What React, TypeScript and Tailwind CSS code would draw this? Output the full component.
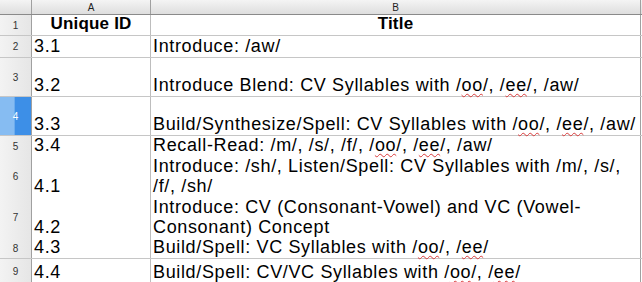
import React from "react";

const Sq = ({ children }: { children: React.ReactNode }) => (
  <span className="underline decoration-wavy decoration-[#d83a3a] decoration-1 underline-offset-[2px]">
    {children}
  </span>
);

interface Row {
  n: number;
  h: string;
  line: boolean;
  a: string;
  b: React.ReactNode;
  selected?: boolean;
}

const rows: Row[] = [
  {
    n: 2,
    h: "h-[22px]",
    line: true,
    a: "3.1",
    b: "Introduce: /aw/",
  },
  {
    n: 3,
    h: "h-[39px]",
    line: true,
    a: "3.2",
    b: (
      <>
        Introduce Blend: CV Syllables with /<Sq>oo</Sq>/, /<Sq>ee</Sq>/, /aw/
      </>
    ),
  },
  {
    n: 4,
    h: "h-[39px]",
    line: true,
    a: "3.3",
    selected: true,
    b: (
      <>
        Build/Synthesize/Spell: CV Syllables with /<Sq>oo</Sq>/, /<Sq>ee</Sq>/, /aw/
      </>
    ),
  },
  {
    n: 5,
    h: "h-[20px]",
    line: false,
    a: "3.4",
    b: (
      <>
        Recall-Read: /m/, /s/, /f/, /<Sq>oo</Sq>/, /<Sq>ee</Sq>/, /aw/
      </>
    ),
  },
  {
    n: 6,
    h: "h-[41px]",
    line: false,
    a: "4.1",
    b: (
      <>
        Introduce: /sh/, Listen/Spell: CV Syllables with /m/, /s/,
        <br />
        /f/, /sh/
      </>
    ),
  },
  {
    n: 7,
    h: "h-[41px]",
    line: false,
    a: "4.2",
    b: (
      <>
        Introduce: CV (Consonant-Vowel) and VC (Vowel-
        <br />
        Consonant) Concept
      </>
    ),
  },
  {
    n: 8,
    h: "h-[21px]",
    line: true,
    a: "4.3",
    b: (
      <>
        Build/Spell: VC Syllables with /<Sq>oo</Sq>/, /<Sq>ee</Sq>/
      </>
    ),
  },
  {
    n: 9,
    h: "h-[24px]",
    line: false,
    a: "4.4",
    b: (
      <>
        Build/Spell: CV/VC Syllables with /<Sq>oo</Sq>/, /<Sq>ee</Sq>/
      </>
    ),
  },
];

const cellText = "text-[18px] leading-[20px] tracking-[0.65px] text-black whitespace-nowrap";
const headText = "text-[17px] leading-[20px] tracking-[0.2px] text-black whitespace-nowrap font-bold";

export default function App() {
  return (
    <div className="w-[642px] h-[282px] overflow-hidden bg-white font-['Liberation_Sans',Arial,sans-serif]">
      {/* column headers */}
      <div className="flex h-[15px] border-b border-[#8a8a8a] bg-[linear-gradient(#f4f4f4,#dedede)]">
        <div className="w-[32px] border-r border-[#a0a0a0]" />
        <div className="w-[119px] border-r border-[#a0a0a0] flex items-center justify-center text-[10px] text-[#222]">
          A
        </div>
        <div className="w-[490px] border-r border-[#a0a0a0] flex items-center justify-center text-[10px] text-[#222]">
          B
        </div>
      </div>

      {/* header row */}
      <div className="flex h-[21px] border-b border-[#c6c6c6]">
        <div className="w-[32px] shrink-0 border-r border-[#a0a0a0] bg-[linear-gradient(90deg,#f3f3f3,#e6e6e6)] flex items-center justify-center text-[10px] text-[#333]">
          1
        </div>
        <div className={`w-[119px] shrink-0 border-r border-[#bdbdbd] pb-[1px] flex items-end justify-center ${headText}`}>
          Unique ID
        </div>
        <div className={`w-[490px] shrink-0 border-r border-[#a0a0a0] pb-[1px] flex items-end justify-center ${headText}`}>
          Title
        </div>
      </div>

      {rows.map((r) => (
        <div
          key={r.n}
          className={`flex ${r.h} ${r.line ? "border-b border-[#c6c6c6]" : ""}`}
        >
          <div
            className={`w-[32px] shrink-0 border-r border-[#a0a0a0] flex items-center justify-center text-[10px] ${
              r.selected
                ? "bg-[linear-gradient(90deg,#86bcf2_0%,#86bcf2_45%,#3d8fe7_50%,#3d8fe7_100%)] text-white"
                : "bg-[linear-gradient(90deg,#f3f3f3,#e6e6e6)] text-[#333]"
            }`}
          >
            {r.n}
          </div>
          <div className={`w-[119px] shrink-0 border-r border-[#bdbdbd] pl-[2px] pb-[1px] flex items-end ${cellText}`}>
            {r.a}
          </div>
          <div className={`w-[490px] shrink-0 border-r border-[#a0a0a0] pl-[2px] pb-[1px] flex items-end ${cellText}`}>
            <div>{r.b}</div>
          </div>
        </div>
      ))}
    </div>
  );
}
